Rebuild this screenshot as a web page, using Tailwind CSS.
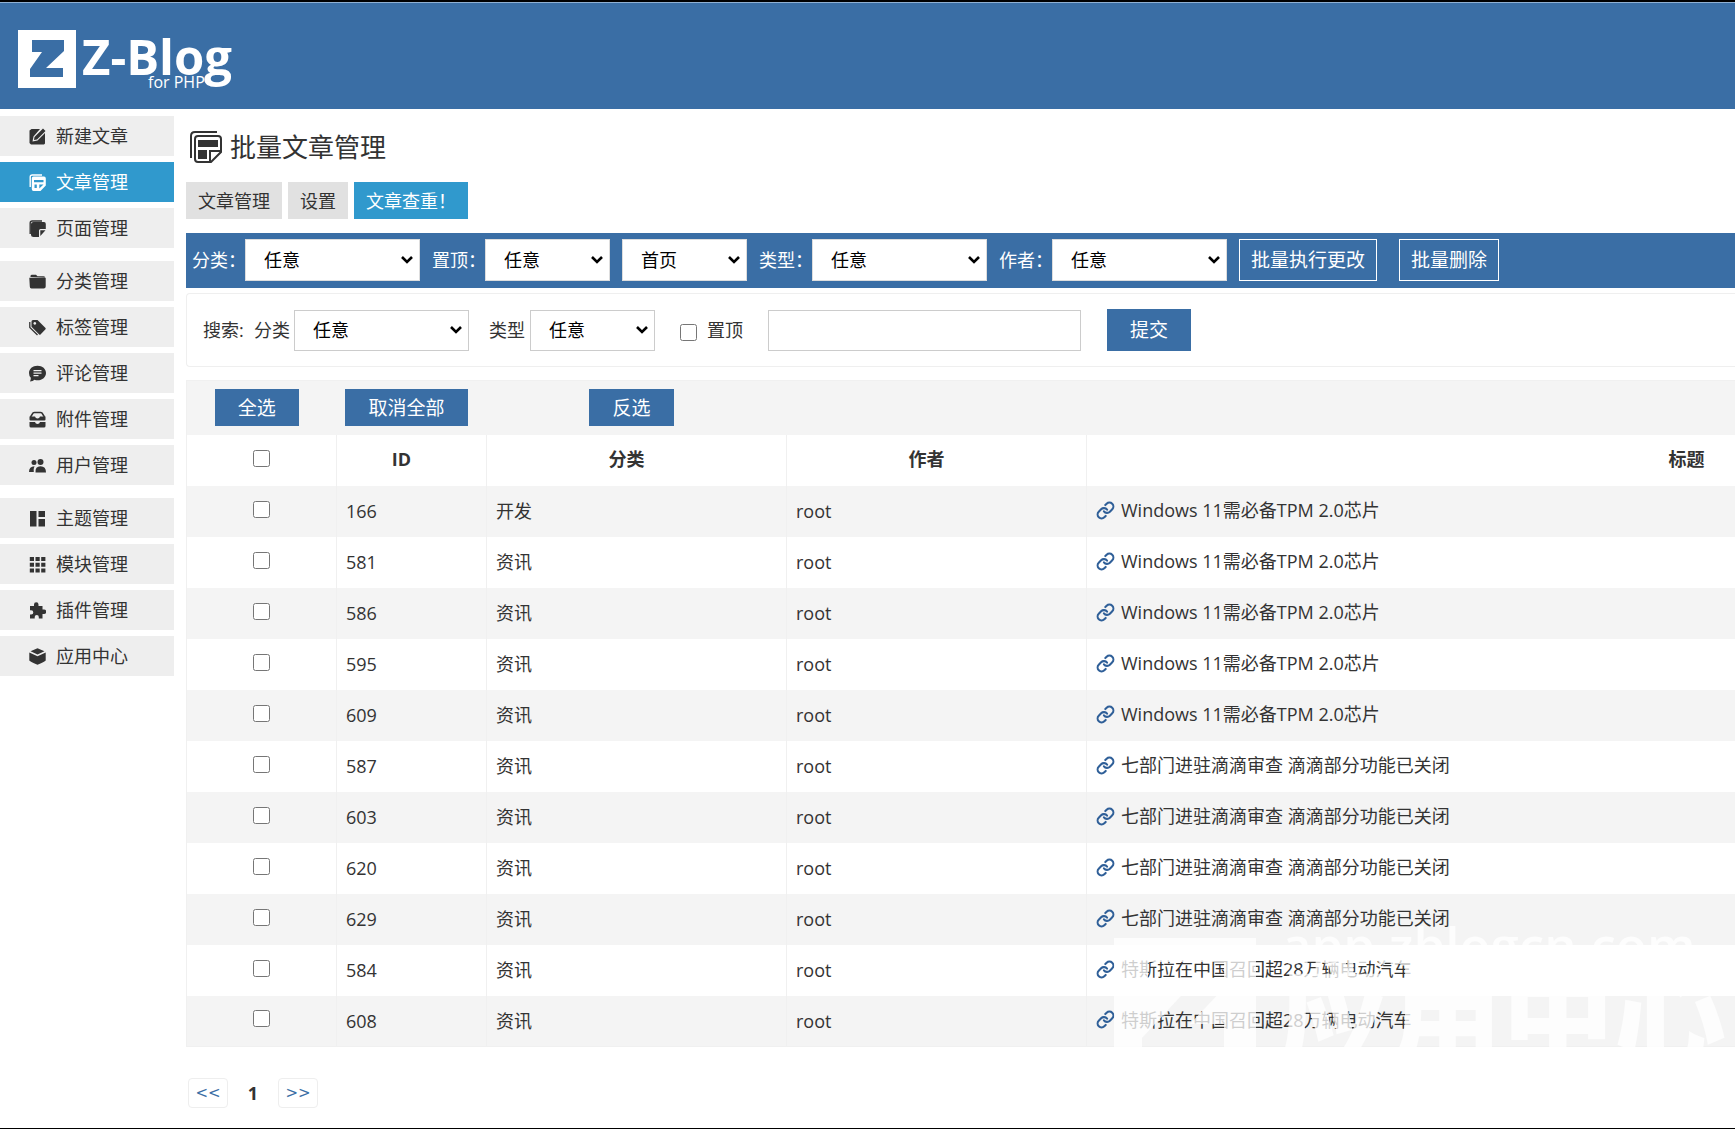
<!DOCTYPE html>
<html lang="zh-CN">
<head>
<meta charset="utf-8">
<meta name="viewport" content="width=device-width, initial-scale=1">
<title>批量文章管理 - Z-Blog</title>
<script src="https://cdn.jsdelivr.net/npm/@tailwindcss/browser@4"></script>
</head>
<body class="bg-white">
<svg class="hidden" aria-hidden="true">
  <symbol id="i-edit" viewBox="0 0 17 17"><path fill="currentColor" d="M2.500 1H11L4.500 8.500 3.500 13.500 8.500 12.500 16 5V15.500L15 16.500H2L.5 15V2.500zM14 .5L16.500 3 8 11.500 5 12 5.500 9z"/></symbol>
  <symbol id="i-posts" viewBox="0 0 17 17"><path fill="none" stroke="currentColor" stroke-width="1.400" d="M1.200 13V3Q1.200 1 3.200 1H13"/><path fill="currentColor" fill-rule="evenodd" d="M4.500 2.500H15Q16.800 2.500 16.800 4.500V11.500L11.500 17H4.500Q2.800 17 2.800 15V4.500Q2.800 2.500 4.500 2.500zM5 6V8.200H14.500V6zM5.500 10.500V14H7.800V10.500zM10.300 10.500V14.500L14.500 10.500z"/></symbol>
  <symbol id="i-page" viewBox="0 0 17 17"><path fill="none" stroke="currentColor" stroke-width="1.400" d="M1.200 14V3Q1.200 1 3.200 1H13"/><path fill="currentColor" d="M4.500 2H15Q16.800 2 16.800 4V9H11.500Q10 9 10 10.500V17H4.500Q2 17 2 15V4Q2 2 4.500 2zM11.300 10.300H16.500L11.300 16z"/></symbol>
  <symbol id="i-folder" viewBox="0 0 17 17"><path fill="currentColor" d="M1.500 4V3Q1.500 1.700 3 1.700H7L8.500 3.200H14.500Q16 3.200 16 4.500zM.3 4.800H16.700V13.500Q16.700 15.500 14.700 15.500H2.500Q.8 15.500.8 13.500z"/></symbol>
  <symbol id="i-tag" viewBox="0 0 17 17"><path fill="none" stroke="currentColor" stroke-width="1.300" d="M.8 3V8.500L8.500 16"/><path fill="currentColor" fill-rule="evenodd" d="M2.500 2.500Q2.500 1 4 1H8.500L16.500 9Q17 9.700 16.500 10.300L11.500 15.500Q10.800 16 10.200 15.500L2.500 7.800zM5.800 3A1.400 1.400 0 1 0 5.810 3z"/></symbol>
  <symbol id="i-chat" viewBox="0 0 17 17"><path fill="currentColor" fill-rule="evenodd" d="M8.500.8C13.500.8 17 4 17 8S13.500 15.300 8.500 15.300Q7 15.300 5.500 14.800Q4 16.500 1 16.500Q2 14.500 1.800 12.800Q0 11 0 8C0 4 3.500.8 8.500.8zM4.500 5V6.300H12.500V5zM4.500 7.500V8.800H12.500V7.500zM4.500 10V11.300H9.500V10z"/></symbol>
  <symbol id="i-inbox" viewBox="0 0 17 17"><path fill="none" stroke="currentColor" stroke-width="1.500" d="M1.500 6L4 2Q4.500 1.500 5.500 1.500H11.500Q12.500 1.500 13 2L15.500 6"/><path fill="currentColor" d="M.5 5.500H6Q6.500 7.500 8.500 7.500T11 5.500H16.500V8.500Q16.500 9.500 15.500 9.500H1.500Q.5 9.500.5 8.500zM.5 11H6Q6.500 13 8.500 13T11 11H16.500V15Q16.500 16.500 15 16.500H2Q.5 16.500.5 15z"/></symbol>
  <symbol id="i-users" viewBox="0 0 17 17"><circle cx="5" cy="5.500" r="2.500" fill="currentColor"/><circle cx="11.500" cy="5" r="3" fill="currentColor"/><path fill="currentColor" d="M6.500 15.500Q6 9.300 11.500 9.300T17 15.500zM0 15Q0 9.500 5.500 9.300Q4.500 11 4.800 15z"/></symbol>
  <symbol id="i-theme" viewBox="0 0 17 17"><path fill="currentColor" d="M1 1H7.500V16.500H1zM9.500 1H16V7H9.500zM9.500 9H16V16.500H9.500z"/></symbol>
  <symbol id="i-grid" viewBox="0 0 17 17"><path fill="currentColor" d="M.8 1H5V5H.8zM6.500 1H10.700V5H6.500zM12.200 1H16.400V5H12.200zM.8 6.700H5V10.700H.8zM6.500 6.700H10.700V10.700H6.500zM12.200 6.700H16.400V10.700H12.200zM.8 12.500H5V16.500H.8zM6.500 12.500H10.700V16.500H6.500zM12.200 12.500H16.400V16.500H12.200z"/></symbol>
  <symbol id="i-puzzle" viewBox="0 0 17 17"><path fill="currentColor" d="M5 4V2.500A2 2 0 0 1 9.500 2.500V4H13.500V7.500H15A2.100 2.100 0 0 1 15 12H13.500V16.500H9.800V15A2 2 0 0 0 5.700 15V16.500H1V12.500H2.200A2 2 0 0 0 2.200 8.300H1V4z"/></symbol>
  <symbol id="i-box" viewBox="0 0 17 17"><path fill="currentColor" d="M8.500.3L15.500 3.200 8.500 6.500 1.500 3.200zM.3 4.500L8.500 8.200 16.700 4.500V12.500Q16.500 13.200 8.500 16.800Q.5 13.200.3 12.500z"/></symbol>
  <symbol id="i-link" viewBox="0 0 24 24"><g fill="none" stroke="currentColor" stroke-width="2.600" stroke-linecap="round"><path d="M10 13a5 5 0 0 0 7.540.54l3-3a5 5 0 0 0-7.070-7.070l-1.720 1.710"/><path d="M14 11a5 5 0 0 0-7.540-.54l-3 3a5 5 0 0 0 7.070 7.070l1.710-1.710"/></g></symbol>
  <symbol id="i-caret" viewBox="0 0 14 10"><path fill="none" stroke="#000" stroke-width="2.600" d="M2 2L7 7L12 2"/></symbol>
</svg>

<div class="relative flex min-h-screen flex-col overflow-hidden border-y-2 border-black font-['Open_Sans','Noto_Sans_CJK_SC',sans-serif] text-lg leading-6 text-[#333]">
  <header class="flex h-[107px] items-center border-t border-[#8fb0d3] bg-[#3a6ea5] pt-1 pl-[18px]">
    <a href="#" aria-label="Z-Blog for PHP">
      <svg class="overflow-visible" width="220" height="66" viewBox="0 0 220 66" fill="#fff">
        <path fill-rule="evenodd" d="M0 5H58V63H0zM14 15V27H24L12 44V52H45V43H28L46 26V15z"/>
        <text x="64" y="50" font-size="49" font-weight="700">Z-Blog</text>
        <text x="130" y="63" font-size="16">for PHP</text>
      </svg>
    </a>
  </header>

  <div class="flex grow">
    <nav id="menu" class="flex w-[174px] shrink-0 flex-col gap-[13px] pt-[7px]"></nav>

    <main class="min-w-0 grow pl-3">
      <h1 class="mt-[18px] flex h-10 items-center gap-2 pl-1 text-[26px]">
        <svg class="size-8" viewBox="0 0 32 32" aria-hidden="true"><g fill="none" stroke="#333" stroke-width="2"><path d="M1 27V5Q1 1 5 1H27"/><path d="M8 5H28Q31 5 31 8V21L21 31H8Q5 31 5 28V8Q5 5 8 5z"/><path d="M20 31V20H31"/></g><path fill="#333" d="M8 9H28V16H8zM8 19H17V28H8z"/></svg>
        批量文章管理
      </h1>
      <div class="mt-[15px] flex gap-1.5">
        <a href="#" class="flex h-[37px] items-center bg-[#e1e1e1] px-3">文章管理</a>
        <a href="#" class="flex h-[37px] items-center bg-[#e1e1e1] px-3">设置</a>
        <a href="#" class="flex h-[37px] items-center bg-[#3099cd] px-3 text-white">文章查重！</a>
      </div>

      <form class="mt-3.5 flex h-[55px] items-center overflow-hidden bg-[#3a6ea5] pb-0.5 pl-1.5 text-white">
        <label for="b-cate" class="w-[53px] shrink-0 whitespace-nowrap">分类：</label>
        <span class="mr-3 grid w-[175px] shrink-0 items-center">
          <select id="b-cate" class="col-start-1 row-start-1 h-[42px] appearance-none border border-[#ddd] bg-white pl-[18px] text-black"><option>任意</option></select>
          <svg class="pointer-events-none col-start-1 row-start-1 mr-1.5 h-2.5 w-3.5 justify-self-end" aria-hidden="true"><use href="#i-caret"/></svg>
        </span>
        <label for="b-top" class="w-[53px] shrink-0 whitespace-nowrap">置顶：</label>
        <span class="mr-3 grid w-[125px] shrink-0 items-center">
          <select id="b-top" class="col-start-1 row-start-1 h-[42px] appearance-none border border-[#ddd] bg-white pl-[18px] text-black"><option>任意</option></select>
          <svg class="pointer-events-none col-start-1 row-start-1 mr-1.5 h-2.5 w-3.5 justify-self-end" aria-hidden="true"><use href="#i-caret"/></svg>
        </span>
        <span class="mr-3 grid w-[125px] shrink-0 items-center">
          <select aria-label="置顶位置" class="col-start-1 row-start-1 h-[42px] appearance-none border border-[#ddd] bg-white pl-[18px] text-black"><option>首页</option></select>
          <svg class="pointer-events-none col-start-1 row-start-1 mr-1.5 h-2.5 w-3.5 justify-self-end" aria-hidden="true"><use href="#i-caret"/></svg>
        </span>
        <label for="b-type" class="w-[53px] shrink-0 whitespace-nowrap">类型：</label>
        <span class="mr-3 grid w-[175px] shrink-0 items-center">
          <select id="b-type" class="col-start-1 row-start-1 h-[42px] appearance-none border border-[#ddd] bg-white pl-[18px] text-black"><option>任意</option></select>
          <svg class="pointer-events-none col-start-1 row-start-1 mr-1.5 h-2.5 w-3.5 justify-self-end" aria-hidden="true"><use href="#i-caret"/></svg>
        </span>
        <label for="b-author" class="w-[53px] shrink-0 whitespace-nowrap">作者：</label>
        <span class="mr-3 grid w-[175px] shrink-0 items-center">
          <select id="b-author" class="col-start-1 row-start-1 h-[42px] appearance-none border border-[#ddd] bg-white pl-[18px] text-black"><option>任意</option></select>
          <svg class="pointer-events-none col-start-1 row-start-1 mr-1.5 h-2.5 w-3.5 justify-self-end" aria-hidden="true"><use href="#i-caret"/></svg>
        </span>
        <button type="button" class="mr-[22px] h-[42px] shrink-0 border border-white px-[11px] text-[19px]">批量执行更改</button>
        <button type="button" class="h-[42px] shrink-0 border border-white px-[11px] text-[19px]">批量删除</button>
      </form>

      <form class="mt-[5px] flex h-[74px] items-center overflow-hidden rounded-l border border-r-0 border-[#efefef] pl-4">
        <span class="w-[51px] shrink-0 whitespace-nowrap">搜索:</span>
        <label for="s-cate" class="w-10 shrink-0">分类</label>
        <span class="mr-5 grid w-[175px] shrink-0 items-center">
          <select id="s-cate" class="col-start-1 row-start-1 h-[41px] appearance-none border border-[#ccc] bg-white pl-[18px] text-black"><option>任意</option></select>
          <svg class="pointer-events-none col-start-1 row-start-1 mr-1.5 h-2.5 w-3.5 justify-self-end" aria-hidden="true"><use href="#i-caret"/></svg>
        </span>
        <label for="s-type" class="w-[41px] shrink-0">类型</label>
        <span class="mr-[25px] grid w-[125px] shrink-0 items-center">
          <select id="s-type" class="col-start-1 row-start-1 h-[41px] appearance-none border border-[#ccc] bg-white pl-[18px] text-black"><option>任意</option></select>
          <svg class="pointer-events-none col-start-1 row-start-1 mr-1.5 h-2.5 w-3.5 justify-self-end" aria-hidden="true"><use href="#i-caret"/></svg>
        </span>
        <input id="s-top" type="checkbox" class="mt-1 mr-2.5 size-[17px] shrink-0">
        <label for="s-top" class="mr-[25px] shrink-0">置顶</label>
        <input type="text" aria-label="关键词" class="mr-[26px] h-[41px] w-[313px] border border-[#ccc] px-2">
        <button class="h-[42px] shrink-0 bg-[#3a6ea5] px-[23px] text-[19px] text-white">提交</button>
      </form>

      <div class="mt-[13px] overflow-hidden">
        <table class="w-[2101px] table-fixed border-collapse border border-[#f0f0f0]">
          <colgroup><col class="w-[150px]"><col class="w-[150px]"><col class="w-[300px]"><col class="w-[300px]"><col></colgroup>
          <thead>
            <tr class="h-[54px] bg-[#f4f4f4]">
              <td class="pr-2.5 text-center"><button type="button" class="h-[37px] bg-[#3a6ea5] px-[23px] text-[19px] text-white">全选</button></td>
              <td class="pr-2.5 text-center"><button type="button" class="h-[37px] bg-[#3a6ea5] px-[23px] text-[19px] text-white">取消全部</button></td>
              <td class="pr-2.5 text-center"><button type="button" class="h-[37px] bg-[#3a6ea5] px-[23px] text-[19px] text-white">反选</button></td>
              <td></td><td></td>
            </tr>
            <tr class="h-[51px]">
              <th class="border-r border-[#f0f0f0] pb-1"><input type="checkbox" aria-label="全部" class="mx-auto block size-[17px]"></th>
              <th class="border-r border-[#f0f0f0] pr-5 pb-0.5">ID</th>
              <th class="border-r border-[#f0f0f0] pr-5 pb-0.5">分类</th>
              <th class="border-r border-[#f0f0f0] pr-5 pb-0.5">作者</th>
              <th class="pb-0.5">标题</th>
            </tr>
          </thead>
          <tbody id="rows"></tbody>
        </table>
      </div>

      <nav aria-label="分页" class="mt-[31px] mb-5 flex h-[30px] items-center pl-0.5 font-['DejaVu_Sans',sans-serif] text-[15px]">
        <a href="#" class="flex h-[30px] w-10 items-center justify-center rounded border border-[#eee] text-[#3a6ea5]">&lt;&lt;</a>
        <b class="w-[50px] text-center font-['Open_Sans',sans-serif] text-lg">1</b>
        <a href="#" class="flex h-[30px] w-10 items-center justify-center rounded border border-[#eee] text-[#3a6ea5]">&gt;&gt;</a>
      </nav>
    </main>
  </div>

  <!-- translucent site watermark over the lower right corner -->
  <svg class="pointer-events-none absolute right-0 bottom-[60px]" width="625" height="150" viewBox="0 0 625 150" fill="#fff" fill-opacity=".76">
    <path fill-rule="evenodd" d="M4 20H146V150H4zM38 44V66H82L32 120V134H114V106H80L114 70V44z"/>
    <text x="172" y="46" font-size="51" font-weight="600">app.zblogcn.com</text>
    <text x="168" y="140" font-size="112" font-weight="900">应用中心</text>
  </svg>
</div>

<script>
  const groups = [
    [['edit', '新建文章'], ['posts', '文章管理'], ['page', '页面管理']],
    [['folder', '分类管理'], ['tag', '标签管理'], ['chat', '评论管理'], ['inbox', '附件管理'], ['users', '用户管理']],
    [['theme', '主题管理'], ['grid', '模块管理'], ['puzzle', '插件管理'], ['box', '应用中心']]
  ];
  document.getElementById('menu').innerHTML = groups.map(g => `<ul class="flex flex-col gap-1.5">${g.map(([icon, name]) => `
    <li><a href="#" class="flex h-10 items-center gap-2.5 pl-[29px] ${icon === 'posts' ? 'bg-[#3099cd] text-white' : 'bg-[#eeeeee]'}"><svg class="size-[17px]" aria-hidden="true"><use href="#i-${icon}"/></svg>${name}</a></li>`).join('')}</ul>`).join('');

  const win = 'Windows 11需必备TPM 2.0芯片', didi = '七部门进驻滴滴审查 滴滴部分功能已关闭', tesla = '特斯拉在中国召回超28万辆电动汽车';
  const posts = [
    [166, '开发', win], [581, '资讯', win], [586, '资讯', win], [595, '资讯', win], [609, '资讯', win],
    [587, '资讯', didi], [603, '资讯', didi], [620, '资讯', didi], [629, '资讯', didi],
    [584, '资讯', tesla], [608, '资讯', tesla]
  ];
  document.getElementById('rows').innerHTML = posts.map(([id, cate, title]) => `
    <tr class="h-[51px] odd:bg-[#f4f4f4]">
      <td class="border-r border-[#f0f0f0] pb-1"><input type="checkbox" aria-label="${id}" class="mx-auto block size-[17px]"></td>
      <td class="border-r border-[#f0f0f0] pl-[9px]">${id}</td>
      <td class="border-r border-[#f0f0f0] pl-[9px]">${cate}</td>
      <td class="border-r border-[#f0f0f0] pl-[9px]">root</td>
      <td class="pb-0.5 pl-[9px]"><a href="#" class="flex items-center gap-1.5"><svg class="size-[19px] text-[#2f5f98]" aria-hidden="true"><use href="#i-link"/></svg>${title}</a></td>
    </tr>`).join('');
</script>
</body>
</html>
